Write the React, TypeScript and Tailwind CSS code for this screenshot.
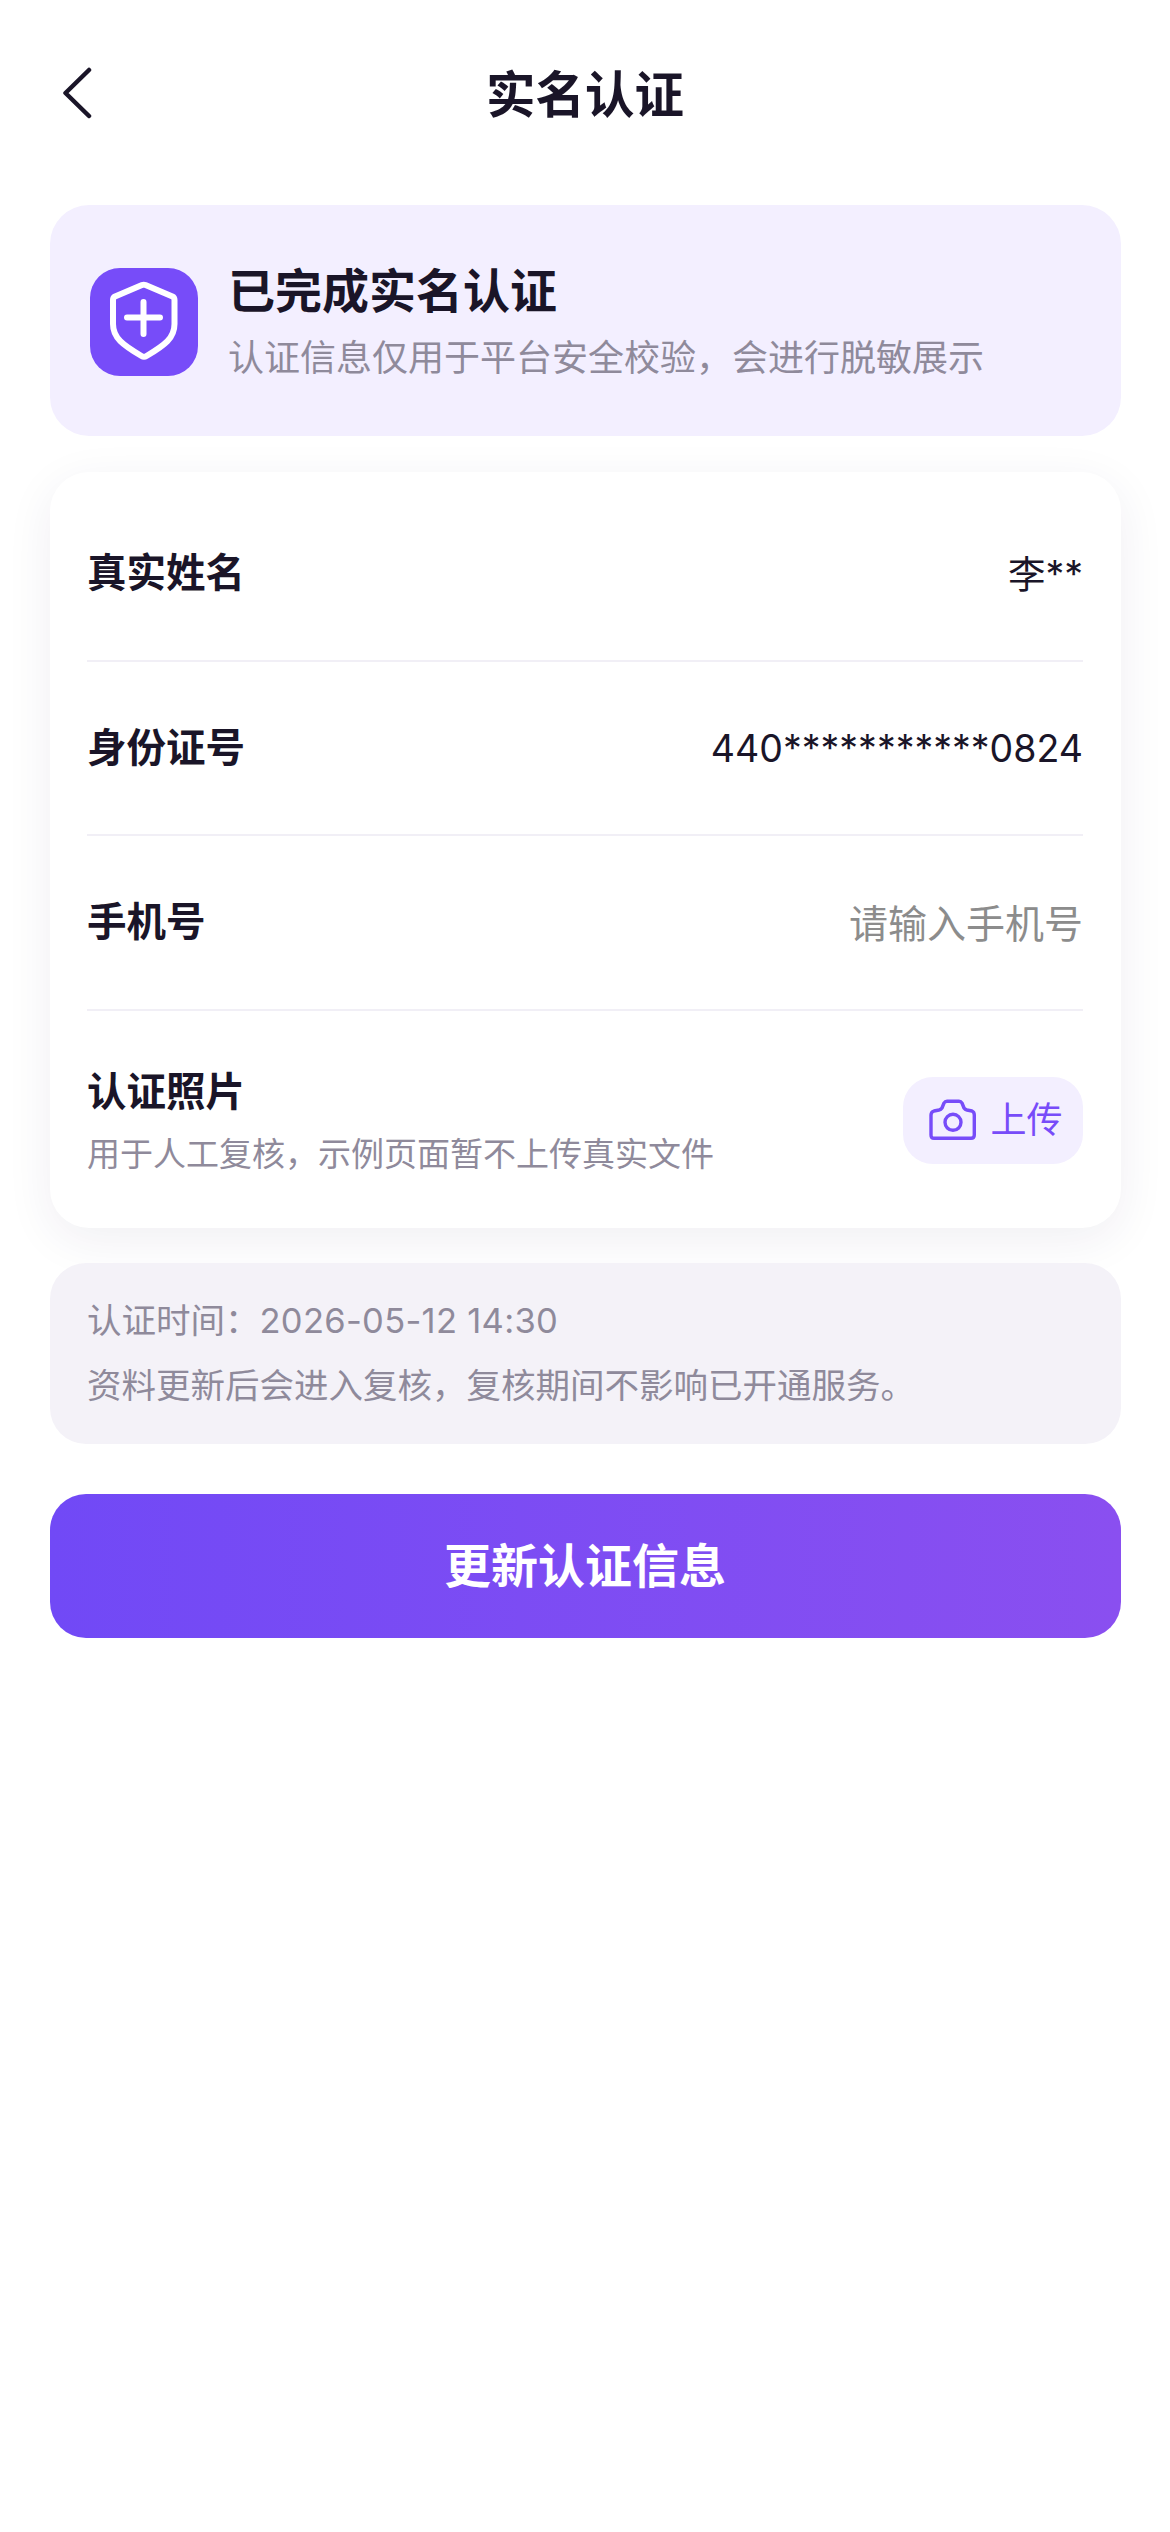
const FONT = "font-['Inter','Noto_Sans_CJK_SC',sans-serif]";

function Row({ label, value, muted }: { label: string; value: string; muted?: boolean }) {
  return (
    <div className="flex h-[174.5px] items-center justify-between border-b-[2px] border-[#f1eff6]">
      <span className="text-[39.5px] font-bold leading-[54px] text-[#1a1528]">{label}</span>
      <span className={`pt-[3px] leading-[54px] ${muted ? "text-[39px] text-[#8c8c8c]" : "text-[37.5px] text-[#1a1528]"}`}>{value}</span>
    </div>
  );
}

export default function App() {
  return (
    <div lang="zh-CN" className={`${FONT} min-h-screen bg-white px-[49.5px]`}>
      <header className="flex h-[190px] items-center justify-between">
        <div className="w-[100px]">
          <svg width="48" height="60" viewBox="0 0 48 60" className="mb-[5px] ml-[13px]" fill="none">
            <path d="M26 7 L2.5 30 L26 53" stroke="#1a1528" strokeWidth="4.5" strokeLinecap="round" strokeLinejoin="round" />
          </svg>
        </div>
        <h1 className="text-[49.5px] font-bold leading-[72px] text-[#1a1528]">实名认证</h1>
        <div className="w-[100px]" />
      </header>

      <section className="mt-[15px] flex h-[231px] items-center gap-[30px] rounded-[39px] bg-[#f3efff] px-[40.5px]">
        <div className="mt-[2px] h-[108px] w-[108px] shrink-0 rounded-[30px] bg-[#774cf9]">
          <svg width="108" height="108" viewBox="0 0 108 108" fill="none" stroke="#fff" strokeLinecap="round" strokeLinejoin="round">
            <path d="M52 17 L25 28.5 Q23 29.5 23 32 V56 C23 70 33 77 51.5 88 Q54 89.5 56.5 88 C75 77 84.5 70 84.5 56 V32 Q84.5 29.5 82.5 28.5 L55.5 17 Q53.7 16.3 52 17 Z" strokeWidth="6" />
            <path d="M37 49.5 H70 M53.5 34 V66" strokeWidth="6" />
          </svg>
        </div>
        <div className="flex flex-col pt-[3px]">
          <h2 className="text-[47px] font-bold leading-[60px] text-[#1a1528]">已完成实名认证</h2>
          <p className="mt-[12px] text-[36px] leading-[51px] text-[#8f8a9b]">认证信息仅用于平台安全校验，会进行脱敏展示</p>
        </div>
      </section>

      <section className="mt-[36px] rounded-[39px] bg-white px-[37.5px] pt-[15px] shadow-[0_12px_48px_rgba(40,25,80,0.07)]">
        <Row label="真实姓名" value="李**" />
        <Row label="身份证号" value="440***********0824" />
        <Row label="手机号" value="请输入手机号" muted />
        <div className="flex h-[217.5px] items-center justify-between">
          <div className="flex flex-col pt-[5px]">
            <span className="text-[39.5px] font-bold leading-[54px] text-[#1a1528]">认证照片</span>
            <span className="mt-[11px] text-[33px] leading-[48px] text-[#8f8a9b]">用于人工复核，示例页面暂不上传真实文件</span>
          </div>
          <button className="mt-[2px] flex h-[87px] w-[180px] items-center justify-center gap-[13px] rounded-[30px] bg-[#f3efff] pl-[6px] text-[36px] leading-[48px] text-[#774cf9]">
            <svg width="48" height="42" viewBox="0 0 48 42" fill="none" stroke="#774cf9" strokeWidth="3.4" strokeLinejoin="round">
              <path d="M2 16 Q2 13 5 12 L10 11 Q12 10.5 13 9 L15 4 Q16 2.3 18 2.3 H30 Q32 2.3 33 4 L35 9 Q36 10.5 38 11 L43 12 Q45.3 13 45.3 16 V36 Q45.3 39.3 42 39.3 H5 Q2 39.3 2 36 Z" />
              <circle cx="24" cy="23.3" r="8" />
            </svg>
            上传
          </button>
        </div>
      </section>

      <section className="mt-[35px] flex h-[181px] flex-col justify-center gap-[17px] rounded-[36px] bg-[#f4f2f8] px-[37.5px] text-[34.5px] leading-[48px] text-[#8f8a9b]">
        <p>认证时间：<span className="tracking-[0.3px]">2026-05-12 14:30</span></p>
        <p>资料更新后会进入复核，复核期间不影响已开通服务。</p>
      </section>

      <button className="mt-[50px] flex h-[144px] w-full items-center justify-center rounded-[36px] bg-gradient-to-r from-[#7149f6] to-[#8a4ff0] text-[47px] font-bold leading-[64px] text-white">
        更新认证信息
      </button>
    </div>
  );
}
